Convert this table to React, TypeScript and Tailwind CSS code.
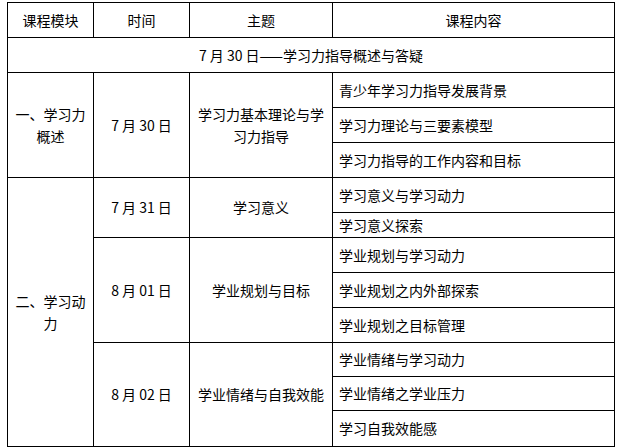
import React from "react";

const font = { fontFamily: '"Noto Sans CJK SC", "Noto Sans", sans-serif' };

function C({ children, className = "" }: { children?: React.ReactNode; className?: string }) {
  return (
    <div className={"bg-white flex items-center justify-center text-center px-[6px] pb-px leading-[22px] " + className}>
      <span>{children}</span>
    </div>
  );
}

function L({ children }: { children?: React.ReactNode }) {
  return <div className="bg-white flex items-center pl-[6px] pb-px leading-[22px]">{children}</div>;
}

export default function App() {
  return (
    <div className="w-[620px] h-[447px] bg-white overflow-hidden text-[14px] text-black" style={font}>
      <div className="ml-[7px] mt-[2px] w-[608px] bg-black p-px grid gap-px grid-cols-[85px_95px_142px_281px] grid-rows-[34px_34px_34px_34px_34px_34px_24px_34px_34px_34px_33px_33px_35px]">
        <C className="bg-[#e6e6e6]">课程模块</C>
        <C className="bg-[#e6e6e6]">时间</C>
        <C className="bg-[#e6e6e6]">主题</C>
        <C className="bg-[#e6e6e6]">课程内容</C>

        <C className="col-span-4">7 月 30 日——学习力指导概述与答疑</C>

        <C className="row-span-3">一、学习力概述</C>
        <C className="row-span-3">7 月 30 日</C>
        <C className="row-span-3">学习力基本理论与学习力指导</C>
        <L>青少年学习力指导发展背景</L>
        <L>学习力理论与三要素模型</L>
        <L>学习力指导的工作内容和目标</L>

        <C className="row-span-8">二、学习动力</C>
        <C className="row-span-2">7 月 31 日</C>
        <C className="row-span-2">学习意义</C>
        <L>学习意义与学习动力</L>
        <L>学习意义探索</L>

        <C className="row-span-3">8 月 01 日</C>
        <C className="row-span-3">学业规划与目标</C>
        <L>学业规划与学习动力</L>
        <L>学业规划之内外部探索</L>
        <L>学业规划之目标管理</L>

        <C className="row-span-3">8 月 02 日</C>
        <C className="row-span-3">学业情绪与自我效能</C>
        <L>学业情绪与学习动力</L>
        <L>学业情绪之学业压力</L>
        <L>学习自我效能感</L>
      </div>
    </div>
  );
}
